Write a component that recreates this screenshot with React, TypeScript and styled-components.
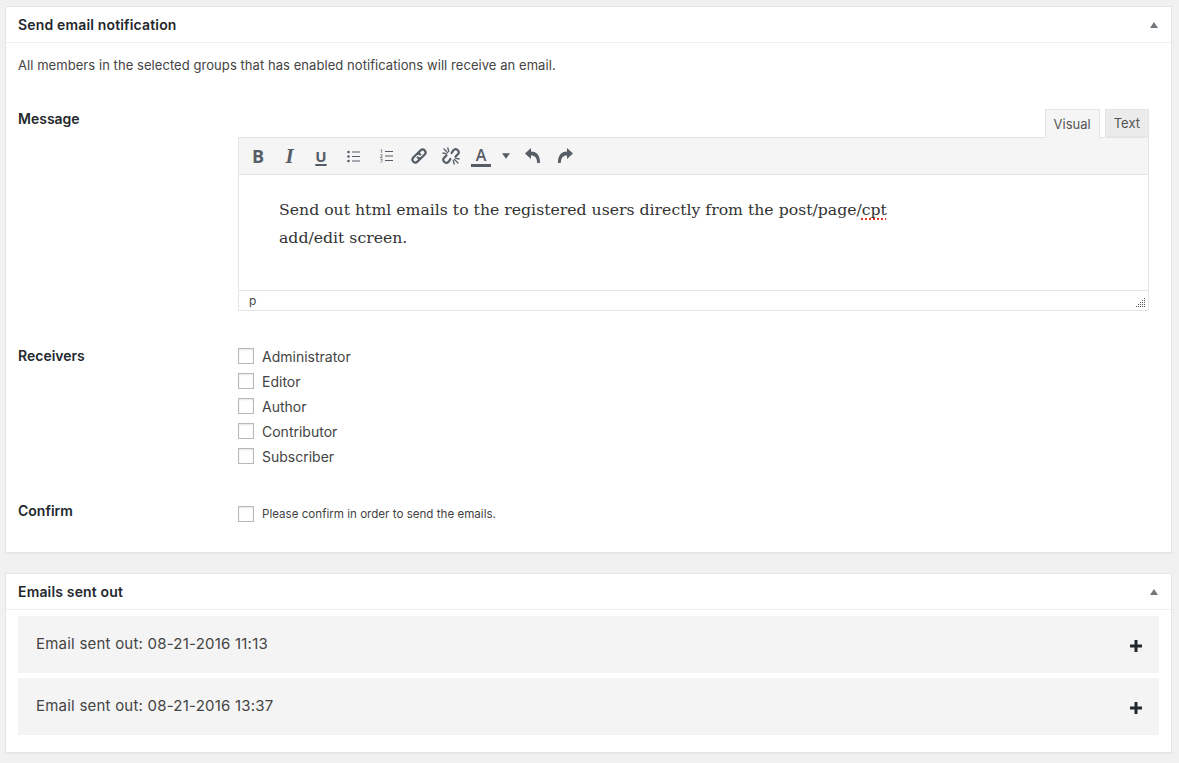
import React from "react";
import styled, { createGlobalStyle } from "styled-components";

const Global = createGlobalStyle`
  html, body { margin: 0; padding: 0; background: #f1f1f1; }
  body { font-family: Inter, "Liberation Sans", sans-serif; font-size: 13px; color: #444; }
`;

const Page = styled.div`
  display: flex;
  flex-direction: column;
  gap: 20px;
  padding: 6px 7px 0 5px;
  height: 757px;
  overflow: hidden;
`;

const Panel = styled.section<{ $height: number }>`
  height: ${(p) => p.$height}px;
  box-sizing: border-box;
  background: #fff;
  border: 1px solid #e5e5e5;
  box-shadow: 0 1px 1px rgba(0, 0, 0, 0.04);
  flex: none;
`;

const PanelHeader = styled.header`
  height: 36px;
  box-sizing: border-box;
  display: flex;
  align-items: center;
  justify-content: space-between;
  padding: 0 12px;
  border-bottom: 1px solid #eee;
`;

const PanelTitle = styled.h2`
  margin: 0;
  font-size: 14px;
  line-height: 20px;
  font-weight: 600;
  letter-spacing: 0.16px;
  color: #23282d;
`;

const Caret = styled.span`
  width: 0;
  height: 0;
  margin-right: 1px;
  border-left: 4px solid transparent;
  border-right: 4px solid transparent;
  border-bottom: 6px solid #72777c;
`;

const Intro = styled.p`
  margin: 0;
  padding: 13px 12px 0;
  font-size: 13px;
  line-height: 18px;
  letter-spacing: 0.06px;
  color: #444;
`;

const FormRow = styled.div<{ $top: number }>`
  display: grid;
  grid-template-columns: 220px 911px;
  padding: ${(p) => p.$top}px 0 0 12px;
`;

const FieldLabel = styled.div`
  font-size: 14px;
  line-height: 20px;
  font-weight: 600;
  color: #23282d;
`;

const Tabs = styled.div`
  display: flex;
  justify-content: flex-end;
  gap: 5px;
  height: 28px;
`;

const Tab = styled.div<{ $active?: boolean }>`
  box-sizing: border-box;
  height: ${(p) => (p.$active ? 29 : 28)}px;
  padding: 0 8px;
  display: flex;
  align-items: center;
  position: relative;
  z-index: 1;
  font-size: 13px;
  color: #555;
  background: ${(p) => (p.$active ? "#f5f5f5" : "#ebebeb")};
  border: 1px solid #e5e5e5;
  border-bottom: ${(p) => (p.$active ? "none" : "1px solid #e5e5e5")};
`;

const Editor = styled.div`
  border: 1px solid #e5e5e5;
  background: #fff;
`;

const Toolbar = styled.div`
  height: 37px;
  box-sizing: border-box;
  display: flex;
  align-items: center;
  background: #f5f5f5;
  border-bottom: 1px solid #e5e5e5;
  color: #555d66;
  padding-left: 9px;
`;

const ToolSlot = styled.span<{ $w: number }>`
  width: ${(p) => p.$w}px;
  flex: none;
  display: flex;
  align-items: center;
  justify-content: center;
  font-family: "Open Sans", sans-serif;
  line-height: 20px;
`;

const BoldGlyph = styled.b`
  font-size: 18px;
  font-weight: 700;
`;
const ItalicGlyph = styled.i`
  font-family: "Liberation Serif", serif;
  font-weight: 700;
  font-size: 21px;
`;
const UnderGlyph = styled.span`
  font-weight: 700;
  font-size: 15px;
  line-height: 14px;
  text-decoration: underline;
  text-underline-offset: 2px;
  text-decoration-thickness: 2px;
`;
const ColorGlyph = styled.span`
  display: block;
  width: 20px;
  box-sizing: border-box;
  text-align: center;
  font-size: 16px;
  font-weight: 600;
  line-height: 18px;
  border-bottom: 3px solid #555d66;
`;

const ContentArea = styled.div`
  height: 115px;
  box-sizing: border-box;
  padding: 21px 40px 0;
  width: 700px;
  font-family: "DejaVu Serif", serif;
  font-size: 15.7px;
  line-height: 28px;
  color: #333;
`;

const Squiggle = styled.span`
  text-decoration: underline dotted #e0331f;
  text-decoration-thickness: 2px;
  text-underline-offset: 3px;
`;

const StatusBar = styled.div`
  height: 20px;
  box-sizing: border-box;
  border-top: 1px solid #e5e5e5;
  padding-left: 10px;
  display: flex;
  align-items: center;
  justify-content: space-between;
  font-size: 12px;
  color: #444;
`;

const Grip = styled.svg`
  margin-right: 2px;
  margin-top: 4px;
`;

const CheckList = styled.div`
  display: flex;
  flex-direction: column;
  gap: 5px;
`;

const CheckRow = styled.label<{ $small?: boolean }>`
  display: flex;
  align-items: center;
  gap: 8px;
  height: 20px;
  font-size: ${(p) => (p.$small ? 11.6 : 14)}px;
  margin-top: ${(p) => (p.$small ? 3 : 0)}px;
  color: #444;
`;

const Box = styled.span`
  width: 16px;
  height: 16px;
  box-sizing: border-box;
  border: 1px solid #b4b9be;
  background: #fff;
  box-shadow: inset 0 1px 2px rgba(0, 0, 0, 0.1);
  flex: none;
`;

const SentList = styled.div`
  display: flex;
  flex-direction: column;
  gap: 5px;
  padding: 6px 12px 0;
`;

const SentRow = styled.div`
  height: 57px;
  box-sizing: border-box;
  background: #f4f4f4;
  display: flex;
  align-items: center;
  justify-content: space-between;
  padding: 0 17px 0 18px;
  font-size: 15px;
  letter-spacing: 0.22px;
  color: #444;
`;

const SentText = styled.span`
  margin-top: -2px;
`;

const Plus = styled.svg`
  margin-top: 2px;
`;

const Bullets = () => (
  <svg width="13" height="13" viewBox="0 0 13 13" fill="none">
    <g fill="#555d66"><circle cx="1.500" cy="2" r="1.300" /><circle cx="1.500" cy="6.500" r="1.300" /><circle cx="1.500" cy="11" r="1.300" /></g>
    <path d="M5 2h8M5 6.500h8M5 11h8" stroke="#555d66" strokeWidth="1" />
  </svg>
);
const Numbers = () => (
  <svg width="13" height="14" viewBox="0 0 13 14" fill="none">
    <path d="M.6 1.100 1.600.6V4M.4 5.800h2L.5 8.500h2.100M.5 10.200h1.900l-1 1.100 1.100.8-1.100 1.100H.4" stroke="#555d66" strokeWidth="0.7" />
    <path d="M5 2.500h8M5 7h8M5 11.500h8" stroke="#555d66" strokeWidth="1" />
  </svg>
);
const LinkIcon = () => (
  <svg width="18" height="18" viewBox="0 0 18 18" fill="none" stroke="#555d66" strokeWidth="2.200" strokeLinecap="round">
    <path d="M7.600 6.400 10.600 3.400a3 3 0 0 1 4.100 0 3 3 0 0 1 0 4.100l-3 3a3 3 0 0 1-4 0" />
    <path d="M10.400 11.600 7.400 14.600a3 3 0 0 1-4.100 0 3 3 0 0 1 0-4.100l3-3a3 3 0 0 1 4 0" />
  </svg>
);
const UnlinkIcon = () => (
  <svg width="18" height="18" viewBox="0 0 18 18" fill="none" stroke="#555d66" strokeLinecap="round">
    <g strokeWidth="2.200">
      <path d="M9.600 6 11.400 3.200a3 3 0 0 1 4.200-.2 3 3 0 0 1 .3 4.200L13.600 9.600" />
      <path d="M8.400 12 6.600 14.800a3 3 0 0 1-4.200.2 3 3 0 0 1-.3-4.200L4.400 8.400" />
    </g>
    <path d="M2 2 5.600 5.600M5.800 1 6.800 4.600M1 6 4.600 6.800M16 16 12.400 12.400M12.200 17 11.200 13.400M17 12 13.400 11.200" strokeWidth="1.300" />
  </svg>
);
const Undo = () => (
  <svg width="18" height="18" viewBox="0 0 18 18" fill="#555d66">
    <path d="M1 6.500 7 1v3.500c5.200 0 9 3 9 11.500h-2.800c0-5.200-2.400-7.600-6.200-7.600V12z" />
  </svg>
);
const Redo = () => (
  <svg width="18" height="18" viewBox="0 0 18 18" fill="#555d66">
    <path d="M17 6.500 11 1v3.500C5.800 4.500 2 7.500 2 16h2.800c0-5.200 2.400-7.600 6.200-7.600V12z" />
  </svg>
);
const CaretDown = () => (
  <svg width="9" height="6" viewBox="0 0 9 6" fill="#555d66"><path d="M0 0h9L4.500 6z" /></svg>
);

const gripDots = [[9, 0], [9, 2], [7, 2], [9, 4], [7, 4], [5, 4], [9, 6], [7, 6], [5, 6], [3, 6], [9, 8], [7, 8], [5, 8], [3, 8], [1, 8]];

const App = () => (
  <>
    <Global />
    <Page>
      <Panel $height={547}>
        <PanelHeader>
          <PanelTitle>Send email notification</PanelTitle>
          <Caret />
        </PanelHeader>
        <Intro>All members in the selected groups that has enabled notifications will receive an email.</Intro>
        <FormRow $top={35}>
          <FieldLabel>Message</FieldLabel>
          <div>
            <Tabs>
              <Tab $active>Visual</Tab>
              <Tab>Text</Tab>
            </Tabs>
            <Editor>
              <Toolbar>
                <ToolSlot $w={20}><BoldGlyph>B</BoldGlyph></ToolSlot>
                <ToolSlot $w={43}><ItalicGlyph>I</ItalicGlyph></ToolSlot>
                <ToolSlot $w={20}><UnderGlyph>U</UnderGlyph></ToolSlot>
                <ToolSlot $w={44}><Bullets /></ToolSlot>
                <ToolSlot $w={22}><Numbers /></ToolSlot>
                <ToolSlot $w={44}><LinkIcon /></ToolSlot>
                <ToolSlot $w={19}><UnlinkIcon /></ToolSlot>
                <ToolSlot $w={42}><ColorGlyph>A</ColorGlyph></ToolSlot>
                <ToolSlot $w={8}><CaretDown /></ToolSlot>
                <ToolSlot $w={45}><Undo /></ToolSlot>
                <ToolSlot $w={19}><Redo /></ToolSlot>
              </Toolbar>
              <ContentArea>
                Send out html emails to the registered users directly from the post/page/<Squiggle>cpt</Squiggle> add/edit screen.
              </ContentArea>
              <StatusBar>
                p
                <Grip width="11" height="10" viewBox="0 0 11 10" fill="#555">
                  {gripDots.map(([x, y]) => (
                    <rect key={`${x}-${y}`} x={x} y={y} width="1" height="1" />
                  ))}
                </Grip>
              </StatusBar>
            </Editor>
          </div>
        </FormRow>
        <FormRow $top={35}>
          <FieldLabel>Receivers</FieldLabel>
          <CheckList>
            {["Administrator", "Editor", "Author", "Contributor", "Subscriber"].map((t) => (
              <CheckRow key={t}><Box />{t}</CheckRow>
            ))}
          </CheckList>
        </FormRow>
        <FormRow $top={35}>
          <FieldLabel>Confirm</FieldLabel>
          <CheckRow $small><Box />Please confirm in order to send the emails.</CheckRow>
        </FormRow>
      </Panel>
      <Panel $height={180}>
        <PanelHeader>
          <PanelTitle>Emails sent out</PanelTitle>
          <Caret />
        </PanelHeader>
        <SentList>
          {["08-21-2016 11:13", "08-21-2016 13:37"].map((d) => (
            <SentRow key={d}>
              <SentText>Email sent out: {d}</SentText>
              <Plus width="12" height="12" viewBox="0 0 12 12" fill="#23282d">
                <path d="M4.500 0h3v4.500H12v3H7.500V12h-3V7.500H0v-3h4.500z" />
              </Plus>
            </SentRow>
          ))}
        </SentList>
      </Panel>
    </Page>
  </>
);

export default App;
